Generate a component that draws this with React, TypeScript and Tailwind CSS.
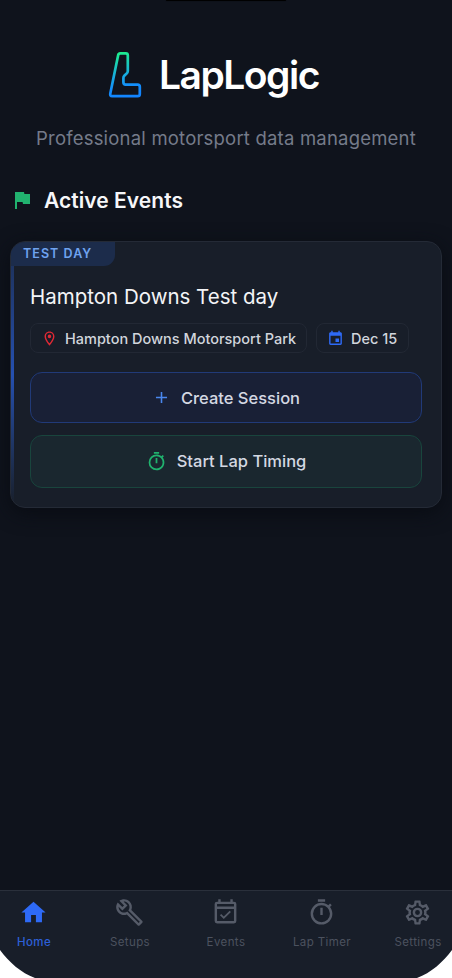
import React from "react";

const icons = {
  flag: "M14.4,6L14,4H5V21H7V14H12.6L13,16H20V6H14.4Z",
  pin: "M12,2C8.13,2 5,5.13 5,9C5,14.25 12,22 12,22S19,14.25 19,9C19,5.13 15.87,2 12,2M7,9A5,5 0 0,1 17,9C17,11.88 14.12,16.19 12,18.88C9.92,16.21 7,11.85 7,9M12,6.5A2.5,2.5 0 0,0 12,11.5A2.5,2.5 0 0,0 12,6.5Z",
  event: "M19,19H5V8H19M16,1V3H8V1H6V3H5C3.89,3 3,3.89 3,5V19A2,2 0 0,0 5,21H19A2,2 0 0,0 21,19V5C21,3.89 20.1,3 19,3H18V1M17,12H12V17H17V12Z",
  plus: "M19,13H13V19H11V13H5V11H11V5H13V11H19V13Z",
  timer: "M12,20A7,7 0 0,1 5,13A7,7 0 0,1 12,6A7,7 0 0,1 19,13A7,7 0 0,1 12,20M19.03,7.39L20.45,5.97C20,5.46 19.55,5 19.04,4.56L17.62,6C16.07,4.74 14.12,4 12,4A9,9 0 0,0 3,13A9,9 0 0,0 12,22C17,22 21,17.97 21,13C21,10.88 20.26,8.93 19.03,7.39M11,14H13V8H11M15,1H9V3H15V1Z",
  home: "M10,20V14H14V20H19V12H22L12,3L2,12H5V20H10Z",
  wrench: "M22.61,19L13.53,9.91C14.46,7.57 14,4.81 12.09,2.91C9.79,0.61 6.21,0.4 3.66,2.26L7.5,6.11L6.08,7.52L2.25,3.69C0.39,6.23 0.6,9.82 2.9,12.11C4.76,13.97 7.47,14.46 9.79,13.59L18.9,22.7C19.29,23.09 19.92,23.09 20.31,22.7L22.61,20.4C23,20 23,19.39 22.61,19M19.61,20.59L10.15,11.13C9.54,11.58 8.86,11.85 8.15,11.95C6.79,12.15 5.36,11.74 4.32,10.7C3.37,9.76 2.93,8.5 3,7.26L6.09,10.35L10.33,6.11L7.24,3C8.48,2.95 9.73,3.39 10.68,4.33C11.76,5.41 12.17,6.9 11.92,8.29C11.8,9 11.5,9.66 11.04,10.25L20.5,19.7L19.61,20.59Z",
  check: "M19,3H18V1H16V3H8V1H6V3H5A2,2 0 0,0 3,5V19A2,2 0 0,0 5,21H19A2,2 0 0,0 21,19V5A2,2 0 0,0 19,3M19,19H5V9H19V19M19,7H5V5H19V7M10.56,17.46L16.5,11.53L15.43,10.47L10.56,15.34L8.45,13.23L7.39,14.29L10.56,17.46Z",
  cog: "M12,8A4,4 0 0,1 16,12A4,4 0 0,1 12,16A4,4 0 0,1 8,12A4,4 0 0,1 12,8M12,10A2,2 0 0,0 10,12A2,2 0 0,0 12,14A2,2 0 0,0 14,12A2,2 0 0,0 12,10M10,22C9.75,22 9.54,21.82 9.5,21.58L9.13,18.93C8.5,18.68 7.96,18.34 7.44,17.94L4.95,18.95C4.73,19.03 4.46,18.95 4.34,18.73L2.34,15.27C2.21,15.05 2.27,14.78 2.46,14.63L4.57,12.97L4.5,12L4.57,11L2.46,9.37C2.27,9.22 2.21,8.95 2.34,8.73L4.34,5.27C4.46,5.05 4.73,4.96 4.95,5.05L7.44,6.05C7.96,5.66 8.5,5.32 9.13,5.07L9.5,2.42C9.54,2.18 9.75,2 10,2H14C14.25,2 14.46,2.18 14.5,2.42L14.87,5.07C15.5,5.32 16.04,5.66 16.56,6.05L19.05,5.05C19.27,4.96 19.54,5.05 19.66,5.27L21.66,8.73C21.79,8.95 21.73,9.22 21.54,9.37L19.43,11L19.5,12L19.43,13L21.54,14.63C21.73,14.78 21.79,15.05 21.66,15.27L19.66,18.73C19.54,18.95 19.27,19.04 19.05,18.95L16.56,17.95C16.04,18.34 15.5,18.68 14.87,18.93L14.5,21.58C14.46,21.82 14.25,22 14,22H10M11.25,4L10.88,6.61C9.68,6.86 8.62,7.5 7.85,8.39L5.44,7.35L4.69,8.65L6.8,10.2C6.4,11.37 6.4,12.64 6.8,13.8L4.68,15.36L5.43,16.66L7.86,15.62C8.63,16.5 9.68,17.14 10.87,17.38L11.24,20H12.76L13.13,17.39C14.32,17.14 15.37,16.5 16.14,15.62L18.57,16.66L19.32,15.36L17.2,13.81C17.6,12.64 17.6,11.37 17.2,10.2L19.31,8.65L18.56,7.35L16.15,8.39C15.38,7.5 14.32,6.86 13.12,6.62L12.75,4H11.25Z",
};

type IconName = keyof typeof icons;

function Icon({ name, className }: { name: IconName; className: string }) {
  return (
    <svg viewBox="0 0 24 24" fill="currentColor" className={`shrink-0 ${className}`}>
      <path d={icons[name]} />
    </svg>
  );
}

function Logo() {
  return (
    <svg viewBox="0 0 34 48" fill="none" className="h-12 w-[34px] shrink-0">
      <defs>
        <linearGradient id="logo" x1="11" y1="1" x2="20" y2="47" gradientUnits="userSpaceOnUse">
          <stop stopColor="#1df08a" />
          <stop offset="0.5" stopColor="#17abe0" />
          <stop offset="0.75" stopColor="#138efb" />
          <stop offset="1" stopColor="#1283ff" />
        </linearGradient>
      </defs>
      <path
        d="M12.2 2.3H17.8Q19.8 2.3 19.8 4.3V20Q19.8 21.2 19 22.1L16.3 24.8Q15.4 25.7 15.4 26.9V31.3Q15.4 33.6 17.7 33.6H29.6Q31.8 33.6 31.8 35.8V43Q31.8 45.2 29.6 45.2H4Q1.8 45.2 2.3 42.6L10.2 4Q10.6 2.3 12.2 2.3Z"
        stroke="url(#logo)"
        strokeWidth="2.7"
      />
    </svg>
  );
}

const tabs: { icon: IconName; label: string; active?: boolean }[] = [
  { icon: "home", label: "Home", active: true },
  { icon: "wrench", label: "Setups" },
  { icon: "check", label: "Events" },
  { icon: "timer", label: "Lap Timer" },
  { icon: "cog", label: "Settings" },
];

export default function App() {
  return (
    <div className="relative flex h-[978px] w-[452px] flex-col overflow-hidden bg-[#0f131c] font-['Inter',sans-serif]">
      <div className="absolute left-[166px] top-0 h-[1px] w-[120px] rounded-b-full bg-black shadow-[0_0_1px_black]" />

      <header className="flex flex-col items-center pt-[51px]">
        <div className="flex h-12 w-full items-center pl-[108px]">
          <Logo />
          <h1 className="ml-[17px] whitespace-nowrap text-[39px] font-semibold leading-[48px] tracking-[-1.5px] text-white">LapLogic</h1>
        </div>
        <p className="mt-[26px] whitespace-nowrap text-[18.5px] leading-[26px] tracking-[0.2px] text-[#757b8a]">
          Professional motorsport data management
        </p>
      </header>

      <div className="mt-[35px] flex h-7 items-center pl-[10px]">
        <Icon name="flag" className="size-6 text-[#21b26f]" />
        <h2 className="ml-[10px] whitespace-nowrap pt-px text-[21px] font-semibold tracking-[0.05px] text-[#f6f7f9]">Active Events</h2>
      </div>

      <section className="relative mx-[10px] mt-[27px] flex h-[267px] flex-col overflow-hidden rounded-[15px] border border-[#242a36] bg-[#181e29] shadow-[0_5px_20px_#090c13]">
        <div className="absolute left-0 top-0 h-full w-[2.5px] bg-linear-to-b from-[#1c2d50] via-[#2550b0] to-[#181e29]" />
        <span className="relative flex h-[23.5px] w-[104px] items-center whitespace-nowrap rounded-br-[11px] bg-[#1c2c4b] pl-[12px] pt-px text-[12.5px] font-semibold tracking-[1.05px] text-[#6fa3f0]">
          TEST DAY
        </span>
        <div className="flex flex-col px-[19px] pt-[16.5px]">
          <h3 className="whitespace-nowrap text-[20.5px] leading-[30px] text-[#f3f4f6]">Hampton Downs Test day</h3>
          <div className="mt-[11px] flex h-[30px] gap-[9px]">
            <span className="flex w-[277px] items-center whitespace-nowrap rounded-[8px] border border-[#222834] pl-[10px] text-[14.5px] font-medium text-[#d1d5dc]">
              <Icon name="pin" className="mr-[7px] size-[17px] text-[#df2935]" />
              <span className="pt-px">Hampton Downs Motorsport Park</span>
            </span>
            <span className="flex w-[93px] items-center whitespace-nowrap rounded-[8px] border border-[#222834] pl-[10px] text-[14.5px] font-medium text-[#d1d5dc]">
              <Icon name="event" className="mr-[7px] size-[17px] text-[#2e6af6]" />
              <span className="pt-px">Dec 15</span>
            </span>
          </div>
          <button className="mt-[19px] flex h-[51px] items-center justify-center gap-[10px] whitespace-nowrap rounded-[12px] border border-[#213a78] bg-[#192036] text-[16.5px] font-medium text-[#d4d8e2]">
            <Icon name="plus" className="size-[19px] text-[#4a87ee]" />
            <span className="pt-px">Create Session</span>
          </button>
          <button className="mt-[12px] flex h-[53px] items-center justify-center gap-[10px] whitespace-nowrap rounded-[12px] border border-[#19453d] bg-[#1a272f] text-[16.5px] font-medium text-[#d4d8e2]">
            <Icon name="timer" className="size-[21px] text-[#20b26e]" />
            <span>Start Lap Timing</span>
          </button>
        </div>
      </section>

      <nav className="mt-auto h-[88px] border-t border-[#2a303b] bg-[#181e29]">
        <div className="-mx-[14px] grid grid-cols-5">
          {tabs.map((t) => (
            <div key={t.label} className={`flex flex-col items-center pt-[7px] ${t.active ? "text-[#2e6af6]" : "text-[#555b68]"}`}>
              <Icon name={t.icon} className="mr-px size-[29px]" />
              <span className={`mt-[7px] whitespace-nowrap text-[11.5px] leading-4 tracking-[0.4px] ${t.active ? "font-medium text-[#2d60d8]" : "text-[#4c525f]"}`}>{t.label}</span>
            </div>
          ))}
        </div>
      </nav>

      <svg viewBox="0 0 35 28" className="absolute bottom-0 left-0 h-7 w-[35px]">
        <path d="M0 0C9 12 21 23 35 28H0Z" fill="white" />
      </svg>
      <svg viewBox="0 0 35 28" className="absolute bottom-0 right-0 h-7 w-[35px]">
        <path d="M35 0C26 12 14 23 0 28H35Z" fill="white" />
      </svg>
    </div>
  );
}
